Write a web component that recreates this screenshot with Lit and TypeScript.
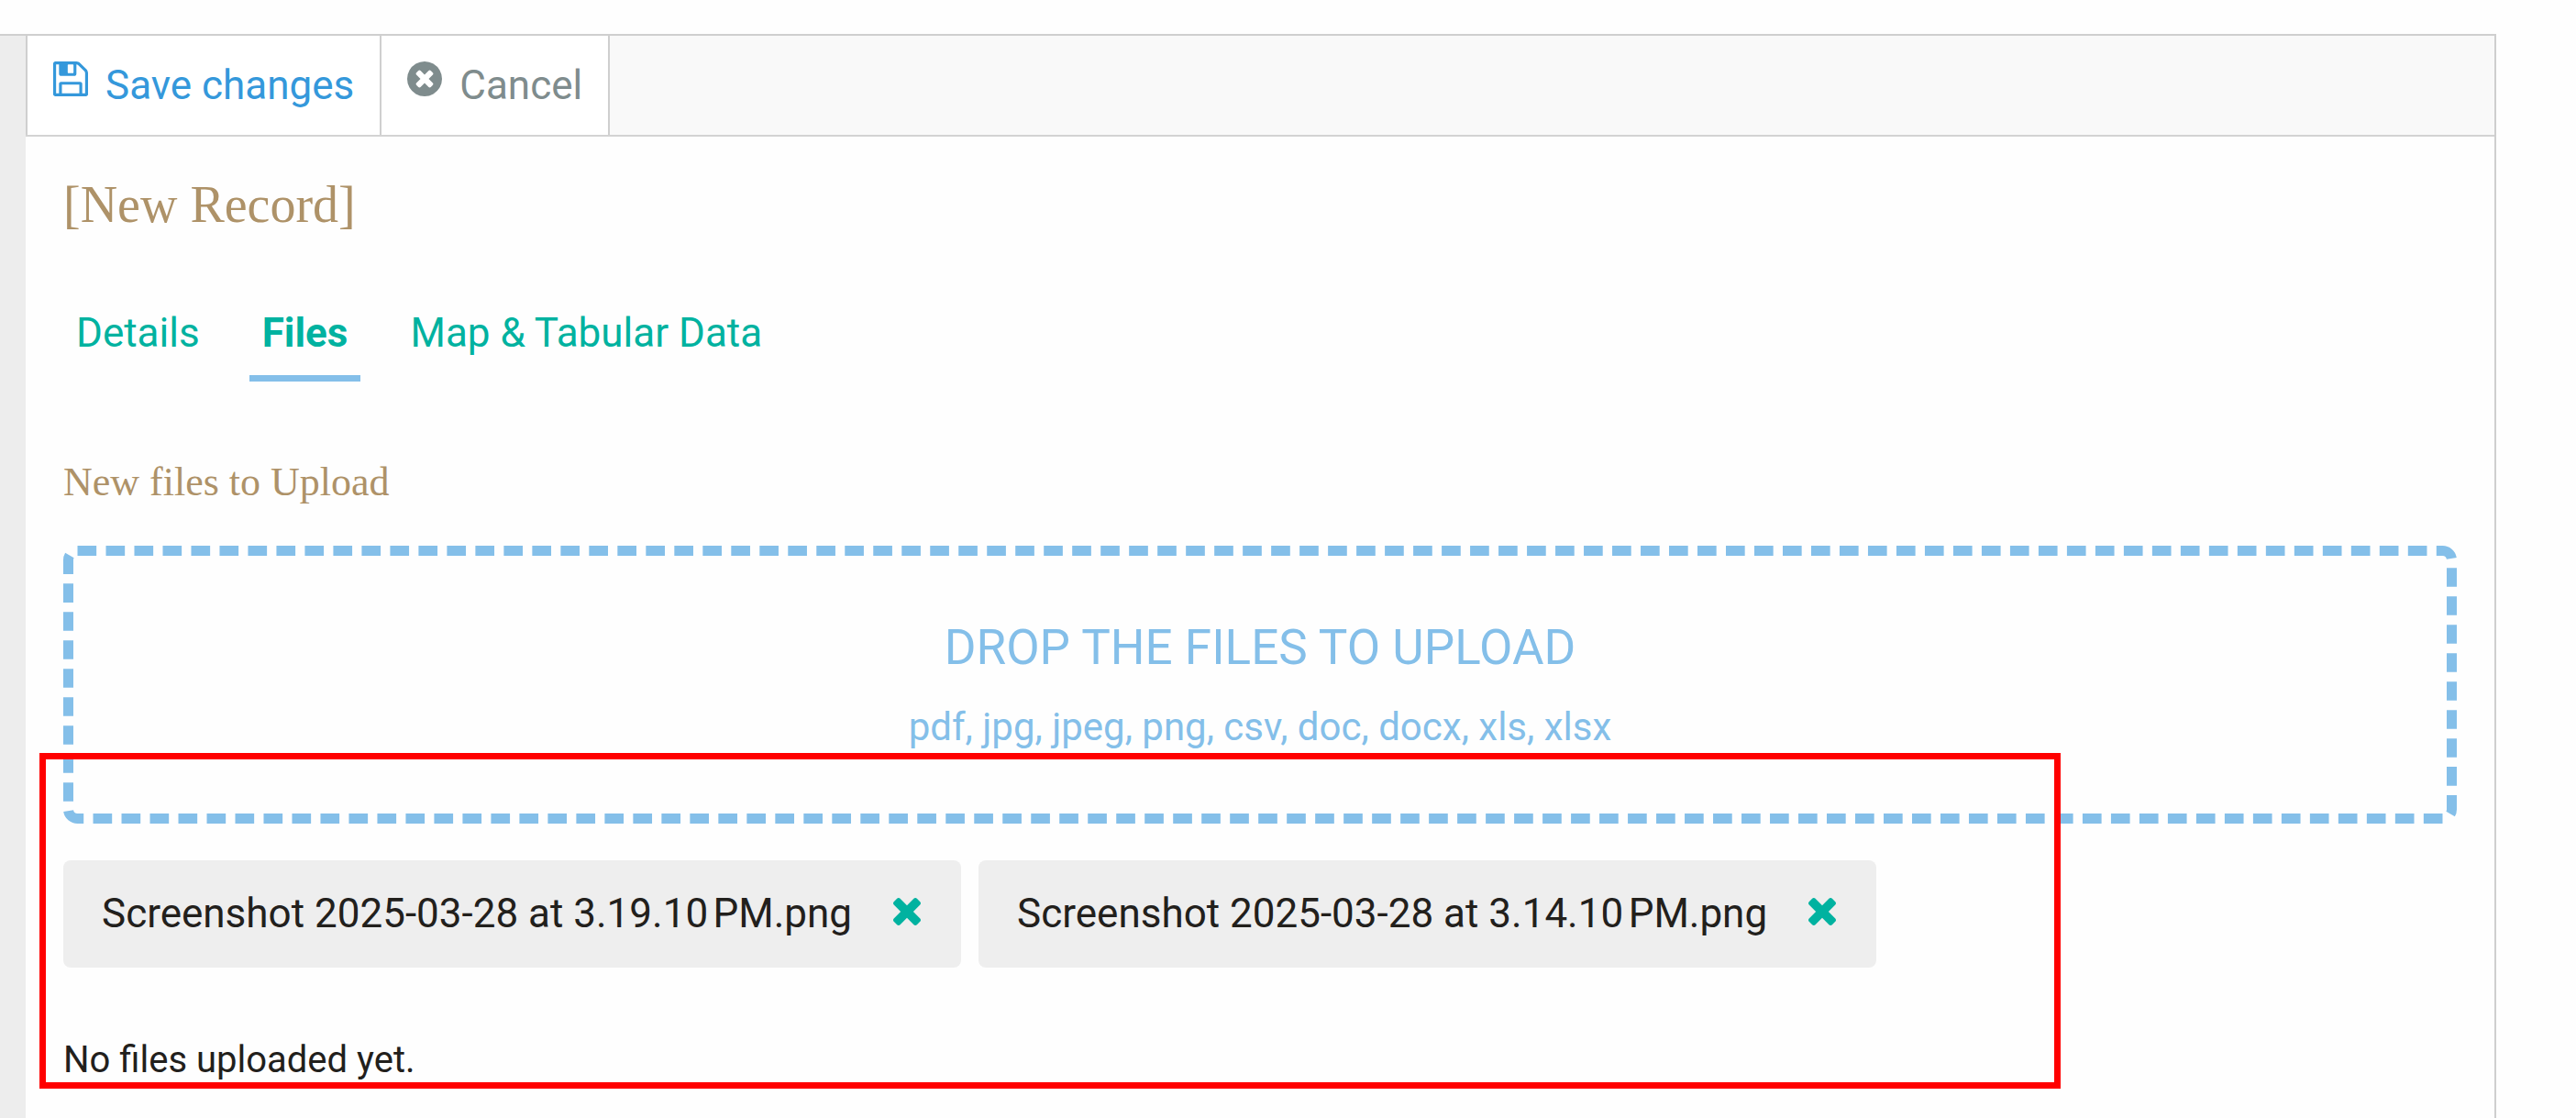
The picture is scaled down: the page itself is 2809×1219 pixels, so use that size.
import { LitElement, html, css, svg } from "lit";
import { customElement, property, state } from "lit/decorators.js";

const ICONS: Record<string, { box: string; path: string }> = {
  save: {
    box: "128 128 1536 1536",
    path: "M512 1536h768v-384h-768v384zm896 0h128v-896q0-14-10-38.5t-20-34.5l-281-281q-10-10-34-20t-39-10v416q0 40-28 68t-68 28h-576q-40 0-68-28t-28-68v-416h-128v1280h128v-416q0-40 28-68t68-28h832q40 0 68 28t28 68v416zm-384-928v-320q0-13-9.5-22.5t-22.5-9.5h-192q-13 0-22.5 9.5t-9.5 22.5v320q0 13 9.5 22.5t22.5 9.5h192q13 0 22.5-9.5t9.5-22.5zm640 32v928q0 40-28 68t-68 28h-1344q-40 0-68-28t-28-68v-1344q0-40 28-68t68-28h928q40 0 88 20t76 48l280 280q28 28 48 76t20 88z",
  },
  cancel: {
    box: "128 128 1536 1536",
    path: "M1277 1122q0-26-19-45l-181-181 181-181q19-19 19-45 0-27-19-46l-90-90q-19-19-46-19-26 0-45 19l-181 181-181-181q-19-19-45-19-27 0-46 19l-90 90q-19 19-19 46 0 26 19 45l181 181-181 181q-19 19-19 45 0 27 19 46l90 90q19 19 46 19 26 0 45-19l181-181 181 181q19 19 45 19 27 0 46-19l90-90q19-19 19-46zm387-226q0 209-103 385.5t-279.5 279.5-385.5 103-385.5-103-279.5-279.5-103-385.5 103-385.5 279.5-279.5 385.5-103 385.5 103 279.5 279.5 103 385.5z",
  },
  remove: {
    box: "302 366 1188 1188",
    path: "M1490 1322q0 40-28 68l-136 136q-28 28-68 28t-68-28l-294-294-294 294q-28 28-68 28t-68-28l-136-136q-28-28-28-68t28-68l294-294-294-294q-28-28-28-68t28-68l136-136q28-28 68-28t68 28l294 294 294-294q28-28 68-28t68 28l136 136q28 28 28 68t-28 68l-294 294 294 294q28 28 28 68z",
  },
};

@customElement("ui-icon")
class UiIcon extends LitElement {
  @property() name = "save";

  static styles = css`
    :host {
      display: block;
      width: 38px;
      height: 38px;
    }
    .icon {
      display: block;
      width: 100%;
      height: 100%;
      fill: currentColor;
    }
  `;

  render() {
    const icon = ICONS[this.name];
    return html`<svg class="icon" viewBox=${icon.box} aria-hidden="true">
      ${svg`<path d=${icon.path}></path>`}
    </svg>`;
  }
}

@customElement("app-root")
class AppRoot extends LitElement {
  @state() private active = "Files";
  @state() private files = [
    "Screenshot 2025-03-28 at 3.19.10\u202fPM.png",
    "Screenshot 2025-03-28 at 3.14.10\u202fPM.png",
  ];

  private tabs = ["Details", "Files", "Map & Tabular Data"];

  static styles = css`
    :host {
      display: block;
      font-family: Roboto, "Liberation Sans", sans-serif;
      font-size: 44px;
      line-height: 52px;
      color: #22201c;
      background: #fefefe;
    }
    * {
      box-sizing: border-box;
    }
    button {
      font: inherit;
      color: inherit;
      background: none;
      border: 0;
      margin: 0;
      padding: 0;
      cursor: pointer;
    }
    .page {
      position: relative;
      min-height: 100vh;
      padding: 37px 87px 0 0;
      display: flex;
    }
    .frame {
      flex: 1;
      display: flex;
      border-top: 2px solid #cfcfcf;
      border-right: 2px solid #cfcfcf;
    }
    .rail {
      flex: 0 0 28px;
      background: #ededed;
    }
    .main {
      flex: 1;
      min-width: 0;
    }
    .toolbar {
      display: flex;
      height: 110px;
      background: #f9f9f9;
      border-bottom: 2px solid #d3d3d3;
    }
    .action {
      display: flex;
      align-items: flex-start;
      gap: 19px;
      padding: 28px 28px 0 28px;
      background: #fff;
      border-right: 2px solid #cfcfcf;
    }
    .action:first-child {
      border-left: 2px solid #cfcfcf;
    }
    .save {
      color: #3498db;
    }
    .cancel {
      color: #7f8c8d;
    }
    .content {
      padding: 38px 41px 0 41px;
    }
    .title,
    .subtitle {
      margin: 0;
      font-family: "Liberation Serif", serif;
      font-weight: 400;
      color: #ae9268;
    }
    .title {
      font-size: 56px;
      line-height: 72px;
    }
    .tabs {
      display: flex;
      gap: 40px;
      margin-top: 78px;
    }
    .tab {
      padding: 0 14px 20px 14px;
      color: #00b2a0;
      border-bottom: 7px solid transparent;
    }
    .tab.active {
      font-weight: 700;
      border-bottom-color: #84bfe9;
    }
    .subtitle {
      margin-top: 84px;
      font-size: 44px;
      line-height: 52px;
    }
    .dropzone {
      position: relative;
      display: flex;
      flex-direction: column;
      align-items: center;
      margin-top: 43px;
      padding: 80px 0 79px 0;
      color: #84bfe9;
      text-align: center;
    }
    .outline {
      position: absolute;
      inset: 0;
      width: 100%;
      height: 100%;
    }
    .outline rect {
      width: calc(100% - 11px);
      height: calc(100% - 11px);
      fill: none;
      stroke: #84bfe9;
      stroke-width: 11px;
    }
    .prompt {
      font-size: 53px;
      line-height: 62px;
      text-transform: uppercase;
    }
    .types {
      margin-top: 30px;
      font-size: 42px;
    }
    .chips {
      display: flex;
      flex-wrap: wrap;
      gap: 19px;
      list-style: none;
      margin: 40px 0 0 0;
      padding: 0;
    }
    .chip {
      display: flex;
      align-items: center;
      gap: 45px;
      padding: 32px 44px 33px 42px;
      background: #eee;
      border-radius: 8px;
    }
    .remove {
      padding-bottom: 4px;
      color: #00b2a0;
    }
    .remove ui-icon {
      width: 30px;
      height: 30px;
    }
    .empty {
      margin: 77px 0 0 0;
      font-size: 40px;
      line-height: 48px;
    }
    .marker {
      position: absolute;
      left: 43px;
      right: 562px;
      top: 821px;
      height: 366px;
      border: 7px solid #f00;
      pointer-events: none;
    }
  `;

  private removeFile(name: string) {
    this.files = this.files.filter((file) => file !== name);
  }

  render() {
    return html`
      <div class="page">
        <div class="frame">
          <div class="rail"></div>
          <main class="main">
            <div class="toolbar">
              <button class="action save" type="button">
                <ui-icon name="save"></ui-icon>
                <span>Save changes</span>
              </button>
              <button class="action cancel" type="button">
                <ui-icon name="cancel"></ui-icon>
                <span>Cancel</span>
              </button>
            </div>
            <div class="content">
              <h1 class="title">[New Record]</h1>
              <div class="tabs" role="tablist">
                ${this.tabs.map(
                  (tab) => html`<button
                    class="tab ${tab === this.active ? "active" : ""}"
                    type="button"
                    role="tab"
                    aria-selected=${tab === this.active}
                    @click=${() => (this.active = tab)}
                  >${tab}</button>`,
                )}
              </div>
              <h2 class="subtitle">New files to Upload</h2>
              <div class="dropzone">
                <svg class="outline" aria-hidden="true">
                  <rect x="5.5" y="5.5" rx="10" pathLength="558" stroke-dasharray="2 1"></rect>
                </svg>
                <span class="prompt">Drop the files to upload</span>
                <span class="types">pdf, jpg, jpeg, png, csv, doc, docx, xls, xlsx</span>
              </div>
              <ul class="chips">
                ${this.files.map(
                  (file) => html`<li class="chip">
                    <span>${file}</span>
                    <button
                      class="remove"
                      type="button"
                      aria-label="Remove ${file}"
                      @click=${() => this.removeFile(file)}
                    ><ui-icon name="remove"></ui-icon></button>
                  </li>`,
                )}
              </ul>
              <p class="empty">No files uploaded yet.</p>
            </div>
          </main>
        </div>
        <div class="marker"></div>
      </div>
    `;
  }
}
